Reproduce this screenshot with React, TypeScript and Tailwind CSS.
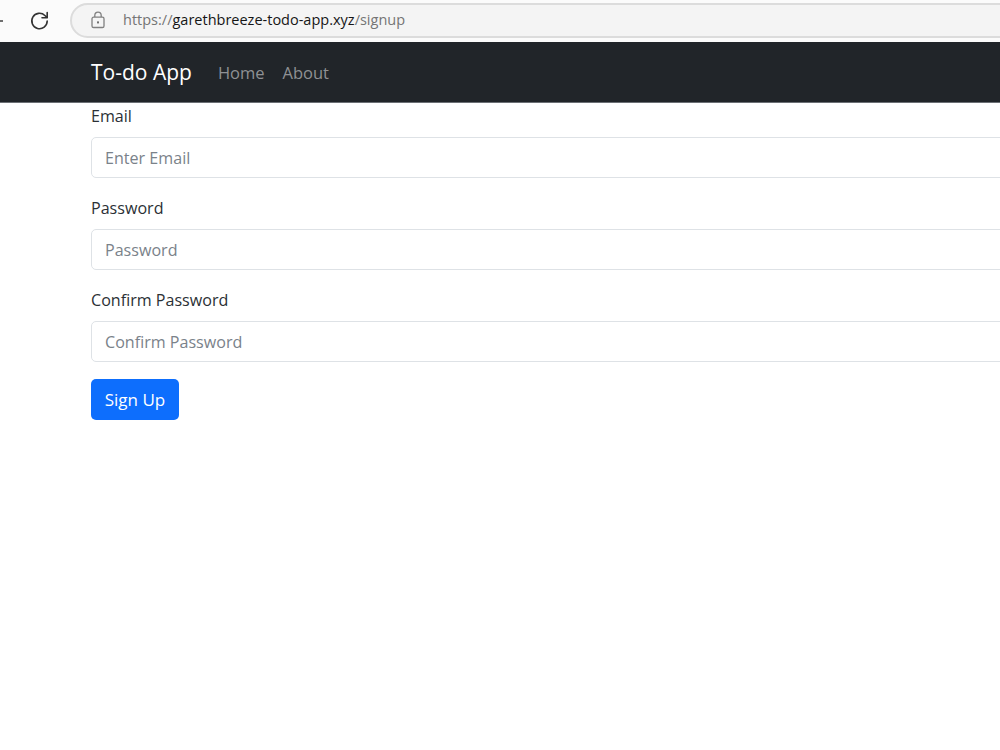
import { useState } from "react";

const fields = [
  { label: "Email", placeholder: "Enter Email" },
  { label: "Password", placeholder: "Password" },
  { label: "Confirm Password", placeholder: "Confirm Password" },
];

function Field({ label, placeholder }: { label: string; placeholder: string }) {
  const [value, setValue] = useState("");
  return (
    <div>
      <label className="block h-[24px] mb-[9px] text-[16.1px] leading-[24px] text-[#2b3035]">{label}</label>
      <input
        value={value}
        onChange={(e) => setValue(e.target.value)}
        placeholder={placeholder}
        className="block w-[1100px] h-[41px] px-[13px] text-[16.1px] text-[#212529] placeholder:text-[#7a828a] bg-white border border-[#dee2e6] rounded-[5px] outline-none"
      />
    </div>
  );
}

export default function App() {
  return (
    <div className="w-[1000px] h-[750px] overflow-hidden bg-white font-['Open_Sans',sans-serif]">
      {/* Browser bar */}
      <div className="flex items-center h-[42px] bg-[#fbfbfb] overflow-hidden">
        <svg width="3" height="10" viewBox="0 0 3 10" className="shrink-0">
          <path d="M0 5h3" stroke="#333" strokeWidth="1.4" />
        </svg>
        <svg width="22" height="22" viewBox="0 0 22 22" fill="none" className="shrink-0 ml-[26px]">
          <path
            d="M18.2 11a7.7 7.7 0 1 1-2.3-5.5L18.2 7.8M18.2 2.6v5.2H13"
            stroke="#333"
            strokeWidth="1.6"
            strokeLinecap="round"
            strokeLinejoin="round"
          />
        </svg>
        <div className="shrink-0 flex items-center w-[1000px] h-[35px] mb-[2px] ml-[19px] pl-[18px] bg-[#f4f4f4] border-2 border-[#dcdcdc] rounded-l-[18px]">
          <svg width="16" height="18" viewBox="0 0 16 18" fill="none" className="shrink-0">
            <rect x="2" y="6.2" width="12" height="10.3" rx="1.6" stroke="#808080" strokeWidth="1.3" />
            <path d="M4.8 6V4.4a3.2 3.2 0 0 1 6.4 0V6" stroke="#808080" strokeWidth="1.3" />
            <rect x="7" y="10.4" width="2" height="2" fill="#707070" />
          </svg>
          <span className="ml-[17px] text-[14.5px] text-[#757575]">
            https://<span className="text-[#161616]">garethbreeze-todo-app.xyz</span>/signup
          </span>
        </div>
      </div>

      {/* Navbar */}
      <nav className="flex items-center h-[61px] pt-[2px] pl-[91px] bg-[#212529] border-b border-[#6c7075]">
        <a className="text-[21px] text-white">To-do App</a>
        <a className="ml-[26px] text-[16.5px] text-[#8f9194]">Home</a>
        <a className="ml-[18px] text-[16.5px] text-[#8f9194]">About</a>
      </nav>

      {/* Signup form */}
      <form className="pl-[91px] pt-[1px]" onSubmit={(e) => e.preventDefault()}>
        <div className="flex flex-col gap-[18px]">
          {fields.map((f) => (
            <Field key={f.label} label={f.label} placeholder={f.placeholder} />
          ))}
        </div>
        <button
          type="submit"
          className="block w-[88px] h-[41px] mt-[17px] pt-[1px] text-[17px] text-white bg-[#0d6efd] rounded-[5px]"
        >
          Sign Up
        </button>
      </form>
    </div>
  );
}
